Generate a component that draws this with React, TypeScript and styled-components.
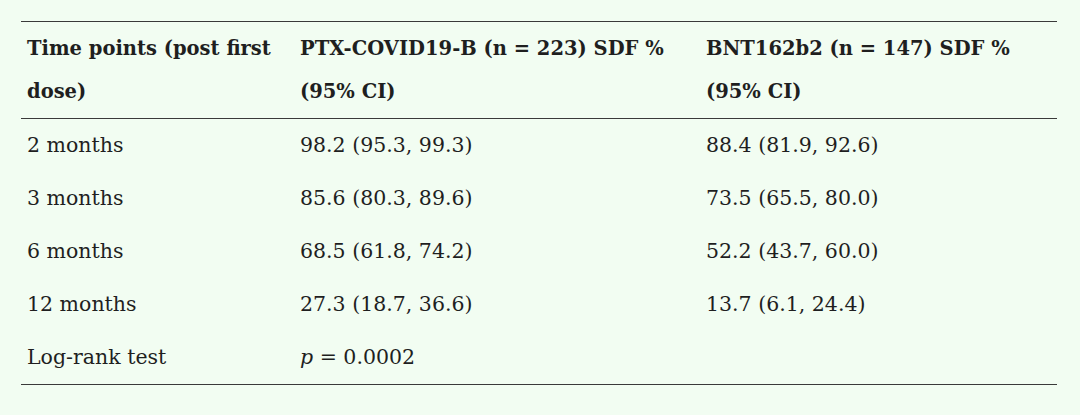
import React from "react";
import styled, { createGlobalStyle } from "styled-components";

const Global = createGlobalStyle`
  html, body {
    margin: 0;
    padding: 0;
    background: #f2fdf2;
  }
  body {
    font-family: "DejaVu Serif", "Liberation Serif", serif;
    color: #1f1f1f;
  }
`;

const Page = styled.div`
  padding: 21px 23px 0 21px;
  height: 415px;
  box-sizing: border-box;
`;

const Table = styled.table`
  width: 1036px;
  border-collapse: collapse;
  table-layout: fixed;
  border-top: 1px solid #3a3a3a;
  border-bottom: 1px solid #3a3a3a;
`;

const Head = styled.thead`
  border-bottom: 1px solid #3a3a3a;
`;

const Th = styled.th`
  text-align: left;
  vertical-align: top;
  font-weight: bold;
  font-size: 19.5px;
  line-height: 43px;
  padding: 5px 6px;
`;

const Td = styled.td`
  text-align: left;
  font-size: 20.5px;
  line-height: 43px;
  padding: 5px 6px;
  white-space: nowrap;
`;

const Italic = styled.i`
  font-style: italic;
`;

const rows: [string, React.ReactNode, string][] = [
  ["2 months", "98.2 (95.3, 99.3)", "88.4 (81.9, 92.6)"],
  ["3 months", "85.6 (80.3, 89.6)", "73.5 (65.5, 80.0)"],
  ["6 months", "68.5 (61.8, 74.2)", "52.2 (43.7, 60.0)"],
  ["12 months", "27.3 (18.7, 36.6)", "13.7 (6.1, 24.4)"],
  [
    "Log-rank test",
    <>
      <Italic>p</Italic> = 0.0002
    </>,
    "",
  ],
];

export default function App() {
  return (
    <>
      <Global />
      <Page>
        <Table>
          <colgroup>
            <col style={{ width: 273 }} />
            <col style={{ width: 406 }} />
            <col style={{ width: 357 }} />
          </colgroup>
          <Head>
            <tr>
              <Th>Time points (post first dose)</Th>
              <Th>PTX-COVID19-B (n = 223) SDF % (95% CI)</Th>
              <Th>BNT162b2 (n = 147) SDF % (95% CI)</Th>
            </tr>
          </Head>
          <tbody>
            {rows.map((r, i) => (
              <tr key={i}>
                <Td>{r[0]}</Td>
                <Td>{r[1]}</Td>
                <Td>{r[2]}</Td>
              </tr>
            ))}
          </tbody>
        </Table>
      </Page>
    </>
  );
}
